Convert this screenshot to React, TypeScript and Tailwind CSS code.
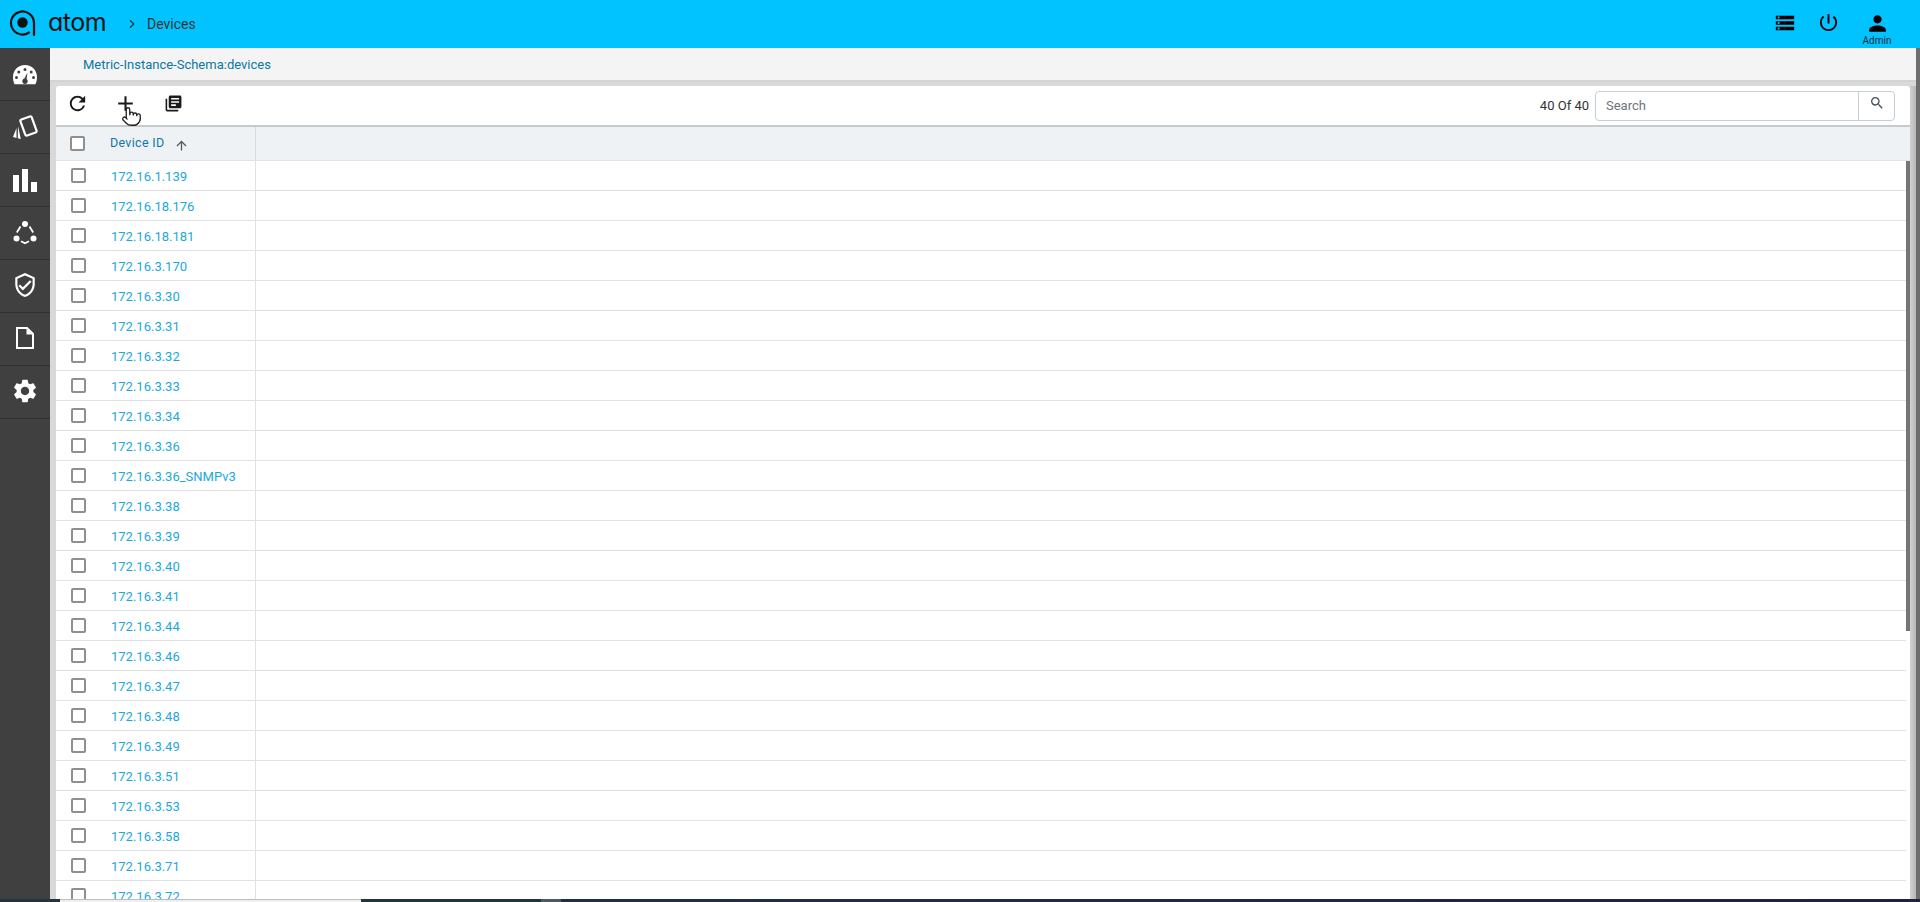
import { ChevronRight, Pointer } from "lucide-react";
import {
  MdAdd,
  MdArrowUpward,
  MdLibraryBooks,
  MdOutlineVerifiedUser,
  MdPerson,
  MdPowerSettingsNew,
  MdRefresh,
  MdSearch,
  MdSettings,
  MdStorage,
} from "react-icons/md";

const devices = [
  "172.16.1.139",
  "172.16.18.176",
  "172.16.18.181",
  "172.16.3.170",
  "172.16.3.30",
  "172.16.3.31",
  "172.16.3.32",
  "172.16.3.33",
  "172.16.3.34",
  "172.16.3.36",
  "172.16.3.36_SNMPv3",
  "172.16.3.38",
  "172.16.3.39",
  "172.16.3.40",
  "172.16.3.41",
  "172.16.3.44",
  "172.16.3.46",
  "172.16.3.47",
  "172.16.3.48",
  "172.16.3.49",
  "172.16.3.51",
  "172.16.3.53",
  "172.16.3.58",
  "172.16.3.71",
  "172.16.3.72",
];

const Logo = () => (
  <svg width="28" height="28" viewBox="0 0 28 28" fill="none">
    <path
      d="M20 23.500 A11.500 11.500 0 1 1 25 13.500 V26"
      stroke="#111"
      strokeWidth="2.200"
      strokeLinecap="round"
    />
    <circle cx="13.500" cy="13.500" r="5.200" fill="#111" />
  </svg>
);

const Gauge = () => (
  <svg width="26" height="22" viewBox="0 0 26 22" className="mt-[2px]">
    <path
      fill="#fff"
      fillRule="evenodd"
      d="M13 1C6 1 1 6.500 1 13c0 2.800.6 5.300 1.600 7.200h20.800C24.400 18.300 25 15.800 25 13 25 6.500 20 1 13 1ZM13 4a1.500 1.500 0 1 1 0 3 1.500 1.500 0 0 1 0-3ZM6.800 6.500a1.500 1.500 0 1 1 0 3 1.500 1.500 0 0 1 0-3ZM19.200 6.500a1.500 1.500 0 1 1 0 3 1.500 1.500 0 0 1 0-3ZM4.500 12a1.500 1.500 0 1 1 0 3 1.500 1.500 0 0 1 0-3ZM21.500 12a1.500 1.500 0 1 1 0 3 1.500 1.500 0 0 1 0-3ZM15.500 8.500 14.600 15c.8.600 1.100 1.400 1.100 2.200 0 1.500-1.200 2.800-2.700 2.800s-2.700-1.300-2.700-2.800c0-1.300.9-2.300 2.100-2.600Z"
    />
  </svg>
);

const Cards = () => (
  <svg width="26" height="26" viewBox="0 0 26 26">
    <path d="M4.500 14 1 23l3.500 1Z" fill="#fff" />
    <path d="M6 12 5.800 24.300l3 .8Z" fill="#fff" />
    <rect
      x="10.500"
      y="3.500"
      width="12"
      height="17"
      rx="1.500"
      fill="#404040"
      stroke="#fff"
      strokeWidth="2.200"
      transform="rotate(-20 16.500 12)"
    />
  </svg>
);

const Bars = () => (
  <svg width="24" height="23" viewBox="0 0 24 23" fill="#fff">
    <rect x="0" y="6" width="6" height="17" />
    <rect x="9" y="0" width="6" height="23" />
    <rect x="18" y="13" width="6" height="10" />
  </svg>
);

const Nodes = () => (
  <svg width="24" height="24" viewBox="0 0 24 24" fill="none">
    <path
      d="M7.500 5.500 3.800 11.500M16.500 5.500 20.200 11.500M8 20.300 12 22.300 16 20.300"
      stroke="#fff"
      strokeWidth="1.800"
    />
    <circle cx="12" cy="3" r="3" fill="#fff" />
    <circle cx="3.500" cy="17.500" r="3" fill="#fff" />
    <circle cx="20.500" cy="17.500" r="3" fill="#fff" />
  </svg>
);

const FileIcon = () => (
  <svg width="18" height="22" viewBox="0 0 18 22" fill="none" className="-mt-[2px]">
    <path d="M1 1h10l6 6v14H1Z" stroke="#fff" strokeWidth="2" />
    <path d="M10.500 1.500V7.500H16.500Z" fill="#fff" />
  </svg>
);

const sideIcons = [
  <Gauge key="gauge" />,
  <Cards key="cards" />,
  <Bars key="bars" />,
  <Nodes key="nodes" />,
  <MdOutlineVerifiedUser key="shield" className="w-[26px] h-[26px] text-white -mt-[2px]" />,
  <FileIcon key="file" />,
  <MdSettings key="settings" className="w-7 h-7 text-white -mt-[2px]" />,
];

const Checkbox = () => (
  <span className="block w-[15px] h-[15px] bg-white border-2 border-[#8f8f8f] rounded-[2px]" />
);

export default function App() {
  return (
    <div className="h-screen w-full flex flex-col overflow-hidden bg-[#f4f4f4] font-['Roboto',sans-serif]">
      <header className="h-12 shrink-0 bg-[#00c3ff] flex items-center">
        <div className="pl-[9px] pb-[2px] flex">
          <Logo />
        </div>
        <span className="ml-[11px] mb-[3px] w-[59px] text-[25px] leading-none font-normal text-[#111] font-['Inter',sans-serif] [font-feature-settings:'cv11'] tracking-[-0.5px]">
          atom
        </span>
        <ChevronRight className="ml-[18px] w-[14px] h-[14px] text-[#333]" strokeWidth={2} />
        <span className="ml-[8px] text-[14px] text-[#333]">Devices</span>
        <div className="ml-auto self-start flex items-start text-black pr-[24px] pt-[11px]">
          <MdStorage className="w-[22px] h-[22px] mt-[1px]" />
          <MdPowerSettingsNew className="w-[23px] h-[23px] ml-[21px]" />
          <div className="ml-[18px] w-[38px] flex flex-col items-center">
            <MdPerson className="w-[25px] h-[25px]" />
            <span className="text-[10px] leading-[12px] text-[#1a2a33] -mt-[1px]">Admin</span>
          </div>
        </div>
      </header>

      <div className="flex-1 min-h-0 flex">
        <nav className="w-[50px] shrink-0 bg-[#404040]">
          {sideIcons.map((icon, i) => (
            <div key={i} className="h-[53px] border-b border-[#303030] flex items-center justify-center">
              {icon}
            </div>
          ))}
        </nav>

        <main className="flex-1 min-w-0 flex flex-col">
          <div className="h-[34px] shrink-0 bg-[#f4f4f4] border-b-2 border-[#d4d4d4] pl-[33px] pt-[2px] flex items-center">
            <span className="text-[13px] text-[#0b78a6]">Metric-Instance-Schema:devices</span>
          </div>
          <div className="flex-1 min-h-0 flex bg-[#d9d9d9] pl-[6px] pt-[4px]">
            <div className="flex-1 min-w-0 flex flex-col bg-white rounded-t-[3px]">
              <div className="h-[41px] shrink-0 border-b-2 border-[#c6cacd] flex items-center text-[#1a1a1a]">
                <MdRefresh className="w-[23px] h-[23px] ml-[10px] -mt-[4px]" />
                <div className="relative ml-[24px] -mt-[4px] w-[25px] h-[25px]">
                  <MdAdd className="w-[25px] h-[25px]" />
                  <Pointer className="absolute left-[8px] top-[13px] w-[21px] h-[25px] fill-white text-[#222]" strokeWidth={1.500} />
                </div>
                <MdLibraryBooks className="w-[19px] h-[19px] ml-[26px] -mt-[4px]" />
                <span className="ml-auto text-[13px] text-[#333]">40 Of 40</span>
                <div className="ml-[6px] mr-[15px] w-[300px] h-[30px] flex border border-[#c3d0da] rounded-[4px]">
                  <span className="flex-1 pl-[10px] text-[13px] leading-[28px] text-[#6c757d]">Search</span>
                  <span className="w-[36px] border-l border-[#c3d0da] flex justify-center pt-[3px] text-[#44515c]">
                    <MdSearch className="w-[16px] h-[16px]" />
                  </span>
                </div>
              </div>

              <div className="h-[34px] shrink-0 bg-[#eef2f5] border-b border-[#e0e4e7] flex">
                <div className="w-[200px] border-r border-[#d8dcdf] flex items-center">
                  <span className="ml-[14px]">
                    <Checkbox />
                  </span>
                  <span className="ml-[25px] mb-[1px] text-[12.500px] text-[#1077a8] tracking-[0.3px]">Device ID</span>
                  <MdArrowUpward className="ml-[10px] mt-[4px] w-[15px] h-[15px] text-[#555]" />
                </div>
              </div>

              <div className="flex-1 min-h-0 flex">
                <div className="flex-1 min-w-0 overflow-hidden">
                  {devices.map((ip) => (
                    <div key={ip} className="h-[30px] border-b border-[#e2e2e2] flex">
                      <div className="w-[200px] shrink-0 border-r border-[#e2e2e2] flex items-center">
                        <span className="ml-[15px] -mt-[1px]">
                          <Checkbox />
                        </span>
                        <span className="ml-[25px] mt-[3px] text-[13px] text-[#1ba8dd]">{ip}</span>
                      </div>
                    </div>
                  ))}
                </div>
                <div className="w-1 shrink-0">
                  <div className="h-[470px] bg-[#757575]" />
                </div>
              </div>
            </div>
            <div className="w-[6px] shrink-0 bg-gradient-to-r from-[#d0d0d0] to-[#b8b8b8]" />
          </div>
        </main>

        <div className="w-1 shrink-0 bg-[#6e6e6e]" />
      </div>

      <div className="h-[3px] shrink-0 flex">
        <div className="w-[60px] bg-[#22343c]" />
        <div className="w-[301px] bg-[#efefef] border-t border-[#bdbdbd]" />
        <div className="w-[180px] bg-[#20343f]" />
        <div className="w-[20px] bg-[#4a5a66]" />
        <div className="flex-1 bg-gradient-to-r from-[#1f3140] to-[#1c2440]" />
      </div>
    </div>
  );
}
